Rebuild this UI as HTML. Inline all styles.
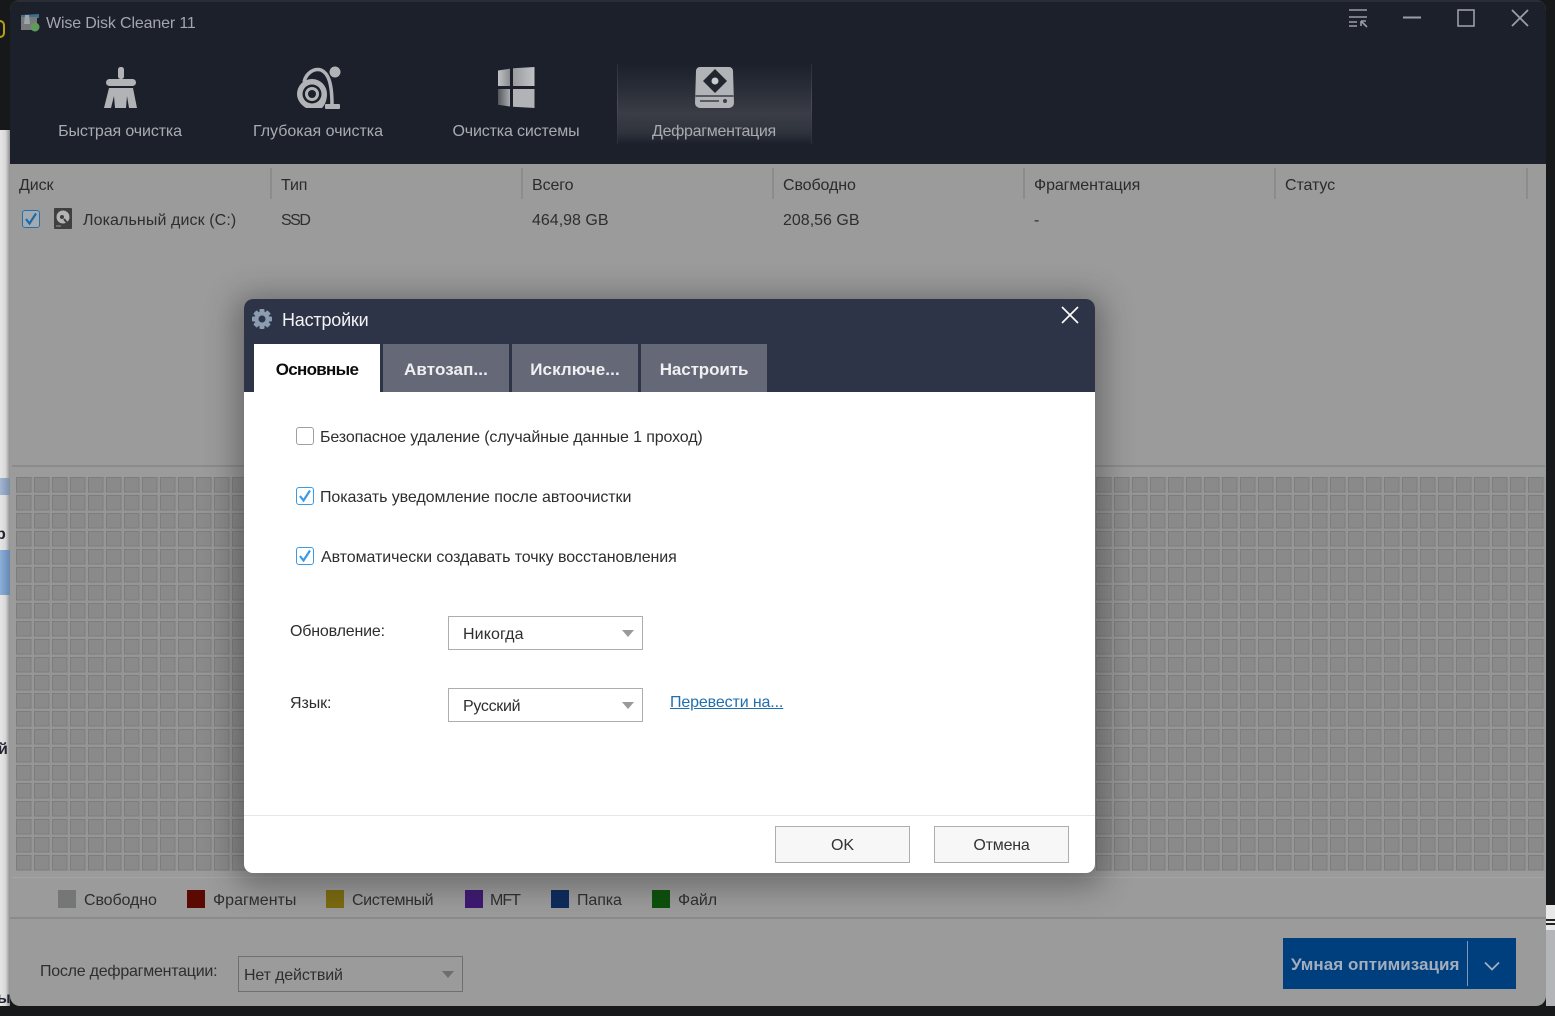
<!DOCTYPE html>
<html lang="ru">
<head>
<meta charset="utf-8">
<title>Wise Disk Cleaner 11</title>
<style>
html,body{margin:0;padding:0;width:1555px;height:1016px;overflow:hidden;background:#171819;font-family:"Liberation Sans","Noto Sans CJK SC",sans-serif;}
.a{position:absolute;}
.t{position:absolute;white-space:nowrap;font-size:16px;line-height:20px;color:#2e2e2e;margin-top:6px;letter-spacing:-.1px;}
.h{color:#2b2b2b;}
.nav{color:#a9abb0;text-align:center;}
.sep{position:absolute;width:2px;top:168px;height:31px;background:#8b8c8c;}
.sw{position:absolute;top:890px;width:18px;height:18px;}
.tab{position:absolute;top:344px;height:48px;width:126px;background:#656977;color:#f0f0f2;font-weight:bold;font-size:17px;line-height:50px;text-align:center;}
.cb{position:absolute;box-sizing:border-box;width:18px;height:18px;border-radius:3px;border:1.500px solid #3a9ae8;background:#fff;}
.sel{position:absolute;background:#fff;border:1px solid #adadad;box-sizing:border-box;width:195px;height:34px;}
.arr{position:absolute;width:0;height:0;border-left:6px solid transparent;border-right:6px solid transparent;border-top:7px solid #9a9a9a;}
.btn{position:absolute;top:826px;width:135px;height:37px;box-sizing:border-box;background:#f7f7f7;border:1px solid #adadad;text-align:center;font-size:16px;line-height:37px;color:#333;}
</style>
</head>
<body>
<!-- backdrop strips -->
<div class="a" style="left:0;top:130px;width:10px;height:876px;background:linear-gradient(90deg,#e6e6e6,#d8d8d8 55%,#8f8f8f);"></div>
<div class="a" style="left:0;top:478px;width:10px;height:17px;background:linear-gradient(90deg,#a3b6d2,#7d8ea8);"></div>
<div class="a" style="left:0;top:550px;width:10px;height:45px;background:linear-gradient(90deg,#8cb0da,#6488b0);"></div>
<div class="a" style="left:0;top:20px;width:5px;height:18px;border:2px solid #b8a012;border-left:0;border-radius:0 6px 6px 0;box-sizing:border-box;"></div>
<div class="t" style="left:-4px;top:519px;font-weight:bold;color:#223;">р</div>
<div class="t" style="left:-2px;top:734px;font-weight:bold;color:#223;">й</div>
<div class="t" style="left:-3px;top:983px;font-weight:bold;color:#223;">ы</div>
<div class="a" style="left:1546px;top:905px;width:9px;height:25px;background:#e8e8e8;"></div>
<div class="a" style="left:1546px;top:930px;width:9px;height:76px;background:#b3b5b8;"></div>
<div class="a" style="left:1546px;top:919px;width:9px;height:2px;background:#222;"></div>
<div class="a" style="left:1546px;top:923px;width:9px;height:2px;background:#222;"></div>

<!-- main window -->
<div class="a" style="left:10px;top:0;width:1536px;height:1006px;border-radius:10px;overflow:hidden;background:#9b9b9b;">
  <div class="a" style="left:0;top:0;width:1536px;height:164px;background:#1b202b;"></div>
  <div class="a" style="left:0;top:0;width:1536px;height:2px;background:#2a2d33;"></div>
</div>

<!-- title bar -->
<svg class="a" style="left:20px;top:12px;" width="21" height="20" viewBox="0 0 21 20">
  <path d="M1 3l18-1v4l-18 1z" fill="#3d6f8f"/>
  <rect x="1" y="5" width="16" height="13" fill="#77797c"/>
  <circle cx="15" cy="15" r="4.500" fill="#5f9a5a"/>
  <path d="M5 3h4l1 9H4z" fill="#9ba4a8"/>
</svg>
<div class="t" style="left:46px;top:8px;color:#a3a6ab;letter-spacing:-.15px;">Wise Disk Cleaner 11</div>
<svg class="a" style="left:1340px;top:0;" width="200" height="34" viewBox="0 0 200 34" fill="none" stroke="#9b9ea5" stroke-width="1.600">
  <path d="M9 10h18M9 17h18M9 22h8M9 26h8"/>
  <path d="M21 21v5M21 21h5M22 22l5 5"/>
  <path d="M63 17.500h18" stroke-width="2"/>
  <rect x="118" y="10" width="16" height="16"/>
  <path d="M172 10l16 16M188 10l-16 16" stroke-width="1.800"/>
</svg>

<!-- nav active -->
<div class="a" style="left:617px;top:64px;width:195px;height:80px;box-sizing:border-box;background:linear-gradient(180deg,#1b202b 0,#282c36 28%,#3a3d46 62%,#30343d 85%,#1b202b 100%);"></div>
<div class="a" style="left:617px;top:64px;width:1px;height:80px;background:linear-gradient(180deg,#2a2e38,#4a4d56 50%,#2a2e38);"></div>
<div class="a" style="left:811px;top:64px;width:1px;height:80px;background:linear-gradient(180deg,#2a2e38,#4a4d56 50%,#2a2e38);"></div>

<!-- broom -->
<svg class="a" style="left:100px;top:62px;" width="42" height="50" viewBox="100 62 42 50" fill="#b1b3b6">
  <rect x="118" y="67" width="6" height="12" rx="2.500"/>
  <rect x="106" y="79" width="30" height="7" rx="3.500"/>
  <path d="M109 88h24l4 20h-8l-2-12-1 12h-11l-1-12-3 12h-7z"/>
</svg>
<!-- vacuum -->
<svg class="a" style="left:292px;top:62px;" width="52" height="50" viewBox="292 62 52 50">
  <path d="M304 82c2-9 10-14 17-12 7 3 11 12 11 35" fill="none" stroke="#b1b3b6" stroke-width="3.500"/>
  <circle cx="335" cy="72" r="5.500" fill="#b1b3b6"/>
  <path d="M312 79a15 15 0 0 1 15 15c0 6-2 11-5 14h-16c-5-3-9-8-9-14a15 15 0 0 1 15-15z" fill="#b1b3b6"/>
  <circle cx="312" cy="94" r="9.500" fill="#1b202b"/>
  <circle cx="312" cy="94" r="7" fill="#b1b3b6"/>
  <circle cx="312" cy="94" r="4" fill="#1b202b"/>
  <rect x="325" y="104" width="15" height="5" rx="1" fill="#b1b3b6"/>
</svg>
<!-- windows -->
<svg class="a" style="left:494px;top:62px;" width="46" height="50" viewBox="494 62 46 50">
  <defs><linearGradient id="w1" x1="0" x2="1" y1="0" y2="0"><stop offset="0" stop-color="#c0c2c5"/><stop offset="1" stop-color="#8a8c90"/></linearGradient>
  <linearGradient id="w2" x1="0" x2="1" y1="0" y2="0"><stop offset="0" stop-color="#999b9f"/><stop offset="1" stop-color="#c0c2c5"/></linearGradient>
  <linearGradient id="w3" x1="0" x2="1" y1="0" y2="0"><stop offset="0" stop-color="#55585e"/><stop offset="1" stop-color="#a9abaf"/></linearGradient></defs>
  <path d="M498 70.500l12-1.800V86h-12z" fill="url(#w1)"/>
  <path d="M513 68.300l21.500-1.300V86H513z" fill="url(#w2)"/>
  <path d="M498 89h12v17.500l-12-1.700z" fill="url(#w3)"/>
  <path d="M513 89h21.500v19L513 106.700z" fill="#b1b3b6"/>
</svg>
<!-- disk -->
<svg class="a" style="left:690px;top:62px;" width="50" height="50" viewBox="690 62 50 50">
  <path d="M700 67h29a4 4 0 0 1 4 4l1 32a5 5 0 0 1-5 5h-29a5 5 0 0 1-5-5l1-32a4 4 0 0 1 4-4z" fill="#b1b3b6"/>
  <path d="M715 69l12 12-12 12-12-12z" fill="#22262f"/>
  <circle cx="715" cy="81" r="3.500" fill="#c9cbce"/>
  <path d="M695.500 96h38" stroke="#3a3e48" stroke-width="1.500"/>
  <path d="M700 101h19" stroke="#3a3e48" stroke-width="1.500"/>
  <circle cx="725" cy="101" r="2" fill="#3a3e48"/>
</svg>

<div class="t nav" style="left:20px;top:116px;width:200px;letter-spacing:-.12px;">Быстрая очистка</div>
<div class="t nav" style="left:218px;top:116px;width:200px;letter-spacing:0;">Глубокая очистка</div>
<div class="t nav" style="left:416px;top:116px;width:200px;letter-spacing:-.15px;">Очистка системы</div>
<div class="t nav" style="left:614px;top:116px;width:200px;letter-spacing:-.3px;">Дефрагментация</div>

<!-- table -->
<div class="sep" style="left:270px;"></div><div class="sep" style="left:521px;"></div><div class="sep" style="left:772px;"></div><div class="sep" style="left:1023px;"></div><div class="sep" style="left:1274px;"></div><div class="sep" style="left:1526px;"></div>
<div class="t h" style="left:19px;top:170px;">Диск</div>
<div class="t h" style="left:281px;top:170px;">Тип</div>
<div class="t h" style="left:532px;top:170px;">Всего</div>
<div class="t h" style="left:783px;top:170px;">Свободно</div>
<div class="t h" style="left:1034px;top:170px;">Фрагментация</div>
<div class="t h" style="left:1285px;top:170px;">Статус</div>

<div class="a" style="left:22px;top:210px;width:18px;height:18px;box-sizing:border-box;border:1.500px solid #2470ac;border-radius:3px;background:#a4abb0;"></div>
<svg class="a" style="left:22px;top:210px;" width="18" height="18" viewBox="0 0 18 18"><path d="M4 9l3.500 4.500 6.500-10" fill="none" stroke="#1d6aa8" stroke-width="2.200"/></svg>
<svg class="a" style="left:54px;top:208px;" width="18" height="22" viewBox="0 0 18 22">
  <rect width="18" height="21" rx="1" fill="#3f3f3f"/>
  <circle cx="9" cy="9" r="6.500" fill="#b4b4b4"/><circle cx="8" cy="9" r="2" fill="#3f3f3f"/>
  <path d="M10 11l4 5" stroke="#3f3f3f" stroke-width="2"/>
  <path d="M2 18h5" stroke="#999" stroke-width="1"/>
</svg>
<div class="t" style="left:83px;top:205px;letter-spacing:.1px;">Локальный диск (C:)</div>
<div class="t" style="left:281px;top:205px;letter-spacing:-1.500px;">SSD</div>
<div class="t" style="left:532px;top:205px;letter-spacing:0;">464,98 GB</div>
<div class="t" style="left:783px;top:205px;letter-spacing:0;">208,56 GB</div>
<div class="t" style="left:1034px;top:205px;">-</div>

<!-- cluster map -->
<div class="a" style="left:12px;top:465px;width:1533px;height:2px;background:#8a8b8b;"></div>
<svg class="a" style="left:16px;top:477px;" width="1529" height="394">
  <defs><pattern id="g" x="0" y="0" width="18" height="18" patternUnits="userSpaceOnUse">
    <rect x=".5" y=".5" width="14.500" height="14.500" fill="#8a8a8a" stroke="#7d7d7d"/>
    <rect x="15.500" width="2.500" height="18" fill="#969696"/>
    <rect y="15.500" width="18" height="2.500" fill="#969696"/>
  </pattern></defs>
  <rect width="1529" height="394" fill="url(#g)"/>
</svg>
<div class="a" style="left:12px;top:877px;width:1533px;height:1px;background:#a4a4a4;"></div>
<div class="a" style="left:10px;top:917px;width:1536px;height:2px;background:#8a8b8b;"></div>

<!-- legend -->
<div class="sw" style="left:58px;background:#757777;"></div><div class="t" style="left:84px;top:885px;">Свободно</div>
<div class="sw" style="left:187px;background:#5a0a03;"></div><div class="t" style="left:213px;top:885px;letter-spacing:0;">Фрагменты</div>
<div class="sw" style="left:326px;background:#7a6a0e;"></div><div class="t" style="left:352px;top:885px;letter-spacing:-.4px;">Системный</div>
<div class="sw" style="left:465px;background:#3d1772;"></div><div class="t" style="left:490px;top:885px;letter-spacing:-1px;">MFT</div>
<div class="sw" style="left:551px;background:#0b2a5c;"></div><div class="t" style="left:577px;top:885px;">Папка</div>
<div class="sw" style="left:652px;background:#0b500a;"></div><div class="t" style="left:678px;top:885px;">Файл</div>

<!-- bottom -->
<div class="t" style="left:40px;top:956px;letter-spacing:-.24px;">После дефрагментации:</div>
<div class="a" style="left:238px;top:956px;width:225px;height:36px;box-sizing:border-box;border:1px solid #6f6f6f;"></div>
<div class="t" style="left:244px;top:960px;letter-spacing:-.15px;">Нет действий</div>
<div class="arr" style="left:442px;top:971px;border-top-color:#6e6e6e;"></div>
<div class="a" style="left:1283px;top:938px;width:233px;height:51px;background:#003f7e;"></div>
<div class="t" style="left:1291px;top:949px;font-weight:bold;font-size:17px;color:#a3aebd;letter-spacing:.05px;">Умная оптимизация</div>
<div class="a" style="left:1467px;top:941px;width:1px;height:45px;background:#7f97b5;"></div>
<svg class="a" style="left:1483px;top:960px;" width="18" height="12" viewBox="0 0 18 12"><path d="M2 2.500l7 7 7-7" fill="none" stroke="#a3aebd" stroke-width="1.800"/></svg>

<!-- dialog -->
<div class="a" style="left:244px;top:299px;width:851px;height:574px;background:#fff;border-radius:9px;overflow:hidden;box-shadow:0 5px 30px 8px rgba(40,40,40,.42);">
  <div class="a" style="left:0;top:0;width:851px;height:93px;background:#2e3447;"></div>
  <div class="a" style="left:0;top:516px;width:851px;height:1px;background:#e6e6e6;"></div>
</div>
<svg class="a" style="left:251px;top:308px;" width="22" height="22" viewBox="0 0 22 22">
  <g fill="#8b9bb0"><circle cx="11" cy="11" r="7.500"/>
  <rect x="8.500" y="1" width="5" height="20" rx="1"/>
  <rect x="8.500" y="1" width="5" height="20" rx="1" transform="rotate(45 11 11)"/>
  <rect x="8.500" y="1" width="5" height="20" rx="1" transform="rotate(90 11 11)"/>
  <rect x="8.500" y="1" width="5" height="20" rx="1" transform="rotate(135 11 11)"/></g>
  <circle cx="11" cy="11" r="3.500" fill="#2e3447"/>
</svg>
<div class="t" style="left:282px;top:304px;font-size:18px;color:#f2f3f5;letter-spacing:-.2px;">Настройки</div>
<svg class="a" style="left:1060px;top:305px;" width="20" height="20" viewBox="0 0 20 20"><path d="M2 2l16 16M18 2L2 18" stroke="#fff" stroke-width="1.600" fill="none"/></svg>

<div class="tab" style="left:254px;background:#fff;color:#0c0c0c;line-height:52px;letter-spacing:-.7px;">Основные</div>
<div class="tab" style="left:383px;line-height:52px;letter-spacing:.1px;">Автозап...</div>
<div class="tab" style="left:512px;line-height:52px;letter-spacing:.1px;">Исключе...</div>
<div class="tab" style="left:641px;line-height:52px;letter-spacing:-.1px;">Настроить</div>

<div class="cb" style="left:296px;top:427px;border-color:#a0a0a0;"></div>
<div class="t" style="left:320px;top:422px;letter-spacing:-.13px;">Безопасное удаление (случайные данные 1 проход)</div>
<div class="cb" style="left:296px;top:487px;"></div>
<svg class="a" style="left:296px;top:487px;" width="18" height="18" viewBox="0 0 18 18"><path d="M4 9l3.500 4.500 6.500-10" fill="none" stroke="#3a9ae8" stroke-width="2.200"/></svg>
<div class="t" style="left:320px;top:482px;letter-spacing:-.08px;">Показать уведомление после автоочистки</div>
<div class="cb" style="left:296px;top:547px;"></div>
<svg class="a" style="left:296px;top:547px;" width="18" height="18" viewBox="0 0 18 18"><path d="M4 9l3.500 4.500 6.500-10" fill="none" stroke="#3a9ae8" stroke-width="2.200"/></svg>
<div class="t" style="left:321px;top:542px;letter-spacing:-.07px;">Автоматически создавать точку восстановления</div>

<div class="t" style="left:290px;top:616px;letter-spacing:-.18px;">Обновление:</div>
<div class="sel" style="left:448px;top:616px;"></div>
<div class="t" style="left:463px;top:619px;letter-spacing:.1px;">Никогда</div>
<div class="arr" style="left:622px;top:630px;"></div>
<div class="t" style="left:290px;top:688px;">Язык:</div>
<div class="sel" style="left:448px;top:688px;"></div>
<div class="t" style="left:463px;top:691px;letter-spacing:-.3px;">Русский</div>
<div class="arr" style="left:622px;top:702px;"></div>
<div class="t" style="left:670px;top:687px;color:#1f6fb0;text-decoration:underline;letter-spacing:-.13px;">Перевести на...</div>

<div class="btn" style="left:775px;line-height:38px;">OK</div>
<div class="btn" style="left:934px;line-height:38px;letter-spacing:-.2px;">Отмена</div>
</body>
</html>
